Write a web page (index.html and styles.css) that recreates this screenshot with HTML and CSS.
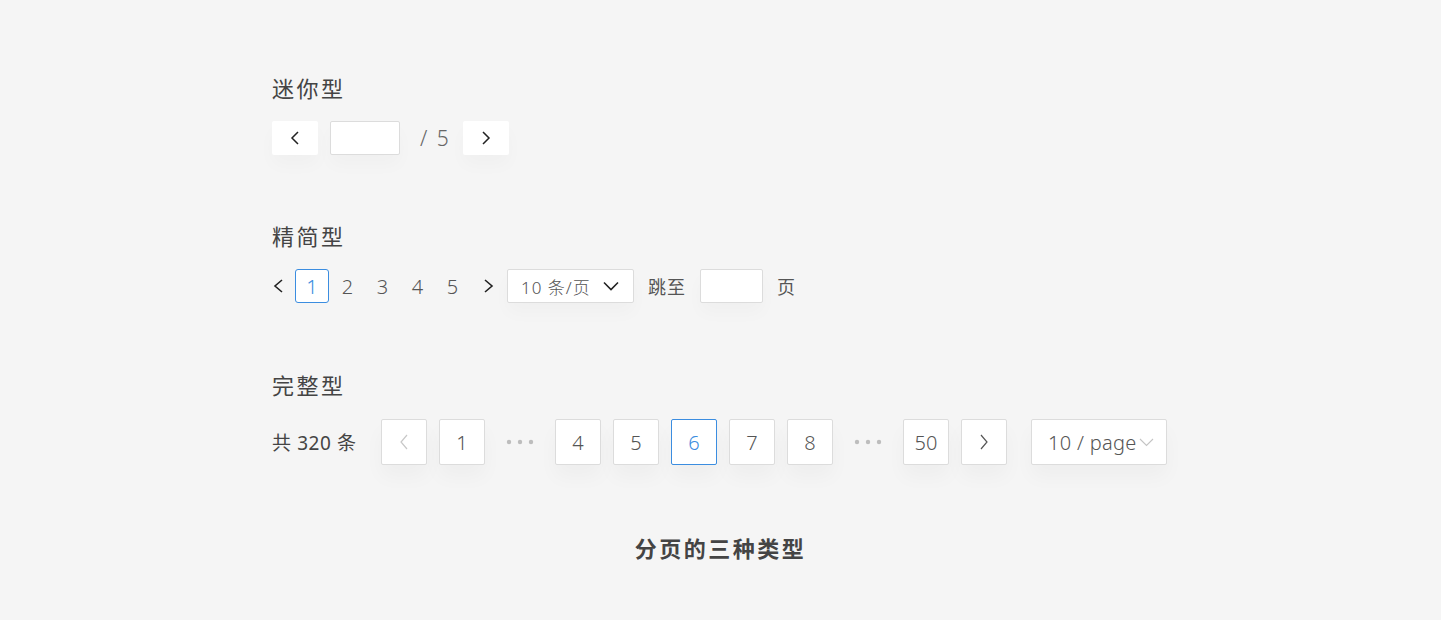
FILE: index.html
```html
<!DOCTYPE html>
<html lang="zh">
<head>
<meta charset="utf-8">
<link rel="stylesheet" href="styles.css">
</head>
<body>
<main class="page">
  <section class="block">
    <h2 class="title">迷你型</h2>
    <div class="row mini">
      <button class="mini-btn"><svg width="12" height="16" viewBox="0 0 12 16"><polyline points="9,2 3,8 9,14" fill="none" stroke="#222" stroke-width="1.5"/></svg></button>
      <span class="mini-input"></span>
      <span class="mini-total">/ 5</span>
      <button class="mini-btn"><svg width="12" height="16" viewBox="0 0 12 16"><polyline points="3,2 9,8 3,14" fill="none" stroke="#222" stroke-width="1.5"/></svg></button>
    </div>
  </section>

  <section class="block b2">
    <h2 class="title">精简型</h2>
    <div class="row simple">
      <span class="s-prev"><svg width="12" height="16" viewBox="0 0 12 16"><polyline points="10,2 3,8 10,14" fill="none" stroke="#222" stroke-width="1.6"/></svg></span>
      <span class="s-item active">1</span>
      <span class="s-item">2</span>
      <span class="s-item">3</span>
      <span class="s-item">4</span>
      <span class="s-item">5</span>
      <span class="s-item"><svg width="12" height="16" viewBox="0 0 12 16"><polyline points="3,2 10,8 3,14" fill="none" stroke="#222" stroke-width="1.6"/></svg></span>
      <span class="s-select">10 条/页<svg width="16" height="10" viewBox="0 0 16 10"><polyline points="1,1.5 8,8.5 15,1.5" fill="none" stroke="#222" stroke-width="1.6"/></svg></span>
      <span class="s-label">跳至</span>
      <span class="s-input"></span>
      <span class="s-label">页</span>
    </div>
  </section>

  <section class="block b3">
    <h2 class="title">完整型</h2>
    <div class="row full">
      <span class="total">共 320 条</span>
      <div class="pager">
        <span class="f-item"><svg width="12" height="18" viewBox="0 0 12 18"><polyline points="9,2 3,9 9,16" fill="none" stroke="#c8c8c8" stroke-width="1.2"/></svg></span>
        <span class="f-item">1</span>
        <span class="f-dots"><svg width="28" height="6" viewBox="0 0 28 6"><circle cx="3" cy="3" r="2.2" fill="#bdbdbd"/><circle cx="14" cy="3" r="2.2" fill="#bdbdbd"/><circle cx="25" cy="3" r="2.2" fill="#bdbdbd"/></svg></span>
        <span class="f-item">4</span>
        <span class="f-item">5</span>
        <span class="f-item active">6</span>
        <span class="f-item">7</span>
        <span class="f-item">8</span>
        <span class="f-dots"><svg width="28" height="6" viewBox="0 0 28 6"><circle cx="3" cy="3" r="2.2" fill="#bdbdbd"/><circle cx="14" cy="3" r="2.2" fill="#bdbdbd"/><circle cx="25" cy="3" r="2.2" fill="#bdbdbd"/></svg></span>
        <span class="f-item">50</span>
        <span class="f-item"><svg width="12" height="18" viewBox="0 0 12 18"><polyline points="3,2 9,9 3,16" fill="none" stroke="#555" stroke-width="1.2"/></svg></span>
      </div>
      <span class="f-select">10 / page<svg width="15" height="9" viewBox="0 0 15 9"><polyline points="1,1 7.5,7.5 14,1" fill="none" stroke="#c4c4c4" stroke-width="1.1"/></svg></span>
    </div>
  </section>

  <h1 class="caption">分页的三种类型</h1>
</main>
</body>
</html>
```

FILE: styles.css
```css
* { box-sizing: border-box; }
html, body { margin: 0; padding: 0; }
body {
  background: #f5f5f5;
  font-family: "Noto Sans", "Noto Sans CJK SC", sans-serif;
  color: #555;
  width: 1441px;
  height: 620px;
  overflow: hidden;
}
.page {
  padding: 72px 0 0 272px;
  display: flex;
  flex-direction: column;
}
.block { display: flex; flex-direction: column; }
.b2 { margin-top: 65px; }
.b3 { margin-top: 66px; }
.title {
  margin: 0 0 19px;
  font-size: 22px;
  line-height: 30px;
  font-weight: 400;
  letter-spacing: 2.5px;
  color: #444;
  font-family: "Noto Sans CJK SC", sans-serif;
}
.b3 .title { margin-bottom: 20px; }
.row { display: flex; align-items: center; }

/* mini */
.mini { height: 34px; }
.mini-btn {
  width: 46px; height: 34px;
  border: 0; background: #fff; border-radius: 2px; padding: 0;
  display: flex; align-items: center; justify-content: center;
  box-shadow: 0 10px 18px rgba(0,0,0,0.025);
}
.mini-input {
  margin-left: 12px;
  width: 70px; height: 34px;
  background: #fff; border: 1px solid #dcdcdc; border-radius: 2px;
  box-shadow: 0 10px 18px rgba(0,0,0,0.025);
}
.mini-total {
  margin: 0 12px 0 20px;
  font-size: 21px; font-weight: 300; color: #666; letter-spacing: 2px;
}

/* simple */
.simple { height: 34px; }
.s-prev { width: 23px; display: flex; align-items: center; }
.s-item {
  width: 35px; height: 34px;
  display: flex; align-items: center; justify-content: center;
  font-size: 20px; font-weight: 300; color: #555;
}
.s-item.active {
  border: 1px solid #3b8de0; border-radius: 3px; color: #3b8de0;
  background: #fff;
  width: 34px; margin-right: 1px;
}
.s-select {
  margin-left: 2px;
  width: 127px; height: 34px;
  background: #fff; border: 1px solid #dcdcdc; border-radius: 2px;
  display: flex; align-items: center; justify-content: space-between;
  padding: 0 14px 0 13px;
  font-size: 17px; font-weight: 300; color: #555; letter-spacing: 1px;
  box-shadow: 0 10px 18px rgba(0,0,0,0.025);
}
.s-label {
  margin-left: 14px;
  font-size: 18px; color: #555;
  font-family: "Noto Sans CJK SC", sans-serif;
  letter-spacing: 1px;
}
.s-input {
  margin-left: 14px;
  width: 63px; height: 34px;
  background: #fff; border: 1px solid #dcdcdc; border-radius: 2px;
  box-shadow: 0 10px 18px rgba(0,0,0,0.025);
}

/* full */
.full { height: 46px; }
.total {
  font-size: 19px; color: #444; letter-spacing: 0.6px;
  width: 109px;
}
.pager { display: flex; gap: 12px; }
.f-item {
  width: 46px; height: 46px;
  background: #fff; border: 1px solid #dcdcdc; border-radius: 2px;
  display: flex; align-items: center; justify-content: center;
  font-size: 20px; font-weight: 300; color: #555;
  box-shadow: 0 12px 20px rgba(0,0,0,0.03);
}
.f-item.active { border-color: #3b8de0; color: #3b8de0; }
.f-dots {
  width: 46px; height: 46px;
  display: flex; align-items: center; justify-content: center;
}
.f-select {
  margin-left: 24px;
  width: 136px; height: 46px;
  background: #fff; border: 1px solid #dcdcdc; border-radius: 2px;
  display: flex; align-items: center; justify-content: space-between;
  padding: 0 12px 0 16px;
  font-size: 20px; font-weight: 300; color: #555; letter-spacing: 0.3px;
  box-shadow: 0 12px 20px rgba(0,0,0,0.03);
}

.caption {
  margin: 67px 0 0 -272px;
  text-align: center;
  font-size: 22px; line-height: 30px;
  font-weight: 700; letter-spacing: 2.5px;
  color: #444;
  font-family: "Noto Sans CJK SC", sans-serif;
}
```
